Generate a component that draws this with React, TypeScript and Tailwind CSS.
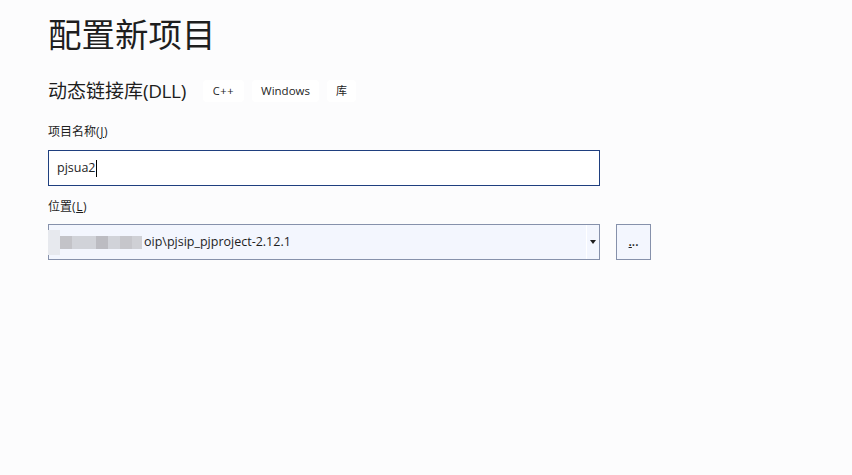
export default function App() {
  return (
    <div className="w-[852px] h-[475px] overflow-hidden bg-[#fcfcfd] pl-12 text-[#1e1e1e]" style={{ fontFamily: '"Open Sans","Noto Sans CJK SC",sans-serif' }}>
      <h1 className="h-[71px] pt-[14px] text-[33.5px] leading-[40px] font-normal whitespace-nowrap">配置新项目</h1>
      <div className="flex items-center h-[22px] mt-[9px]">
        <span className="text-[19px] leading-[22px] w-[155px] whitespace-nowrap">动态链接库<span className="tracking-[-0.4px]">(DLL)</span></span>
        <span className="h-[22px] w-[41px] flex items-center justify-center bg-white rounded-[4px] text-[11px] tracking-[0.6px]">C++</span>
        <span className="ml-2 h-[22px] w-[67px] flex items-center justify-center bg-white rounded-[4px] text-[11.5px]">Windows</span>
        <span className="ml-2 h-[22px] w-[29px] flex items-center justify-center bg-white rounded-[4px] text-[11px]">库</span>
      </div>
      <div className="mt-[21px] h-[18px] text-[12px] leading-[18px]">项目名称<span className="tracking-[0.6px]">(<span className="underline">J</span>)</span></div>
      <div className="mt-[9px] w-[552px] h-[36px] border border-[#1f3f7f] bg-white flex items-center pl-2 text-[12.5px]">
        <span>pjsua2</span><span className="w-px h-[17px] bg-black" />
      </div>
      <div className="mt-[12px] h-[18px] text-[12px] leading-[18px]">位置<span className="tracking-[0.6px]">(<span className="underline">L</span>)</span></div>
      <div className="mt-[8px] flex items-start">
        <div className="relative w-[552px] h-[36px] border border-[#8691ab] bg-[#f3f6fe] flex items-center text-[12.5px]">
          <div className="absolute left-[-1px] top-[5px] h-[25px] w-[12px] bg-[#e7e9ee]" />
          <div className="flex ml-[11px] h-[13px] w-[82px] shrink-0">
            <div className="w-3 bg-[#c3c3c8]" />
            <div className="w-[24px] bg-[#d1d3d9]" />
            <div className="w-3 bg-[#bcbcc2]" />
            <div className="w-3 bg-[#d1d3d9]" />
            <div className="w-3 bg-[#c6c6cb]" />
            <div className="w-[10px] bg-[#cfd0d5]" />
          </div>
          <span className="ml-[2px]">oip\pjsip_pjproject-2.12.1</span>
          <div className="absolute right-0 top-0 h-full w-[13px] border-l border-white flex items-center justify-center">
            <svg width="6" height="4" viewBox="0 0 6 4"><path d="M0 0H6L3 4Z" fill="#1e1e1e" /></svg>
          </div>
        </div>
        <div className="ml-4 w-[35px] h-[36px] border border-[#8691ab] bg-[#f3f6fe] flex items-center justify-center text-[12px] font-semibold">
          <span className="leading-none mb-[1px]"><span className="underline">.</span>..</span>
        </div>
      </div>
    </div>
  );
}
